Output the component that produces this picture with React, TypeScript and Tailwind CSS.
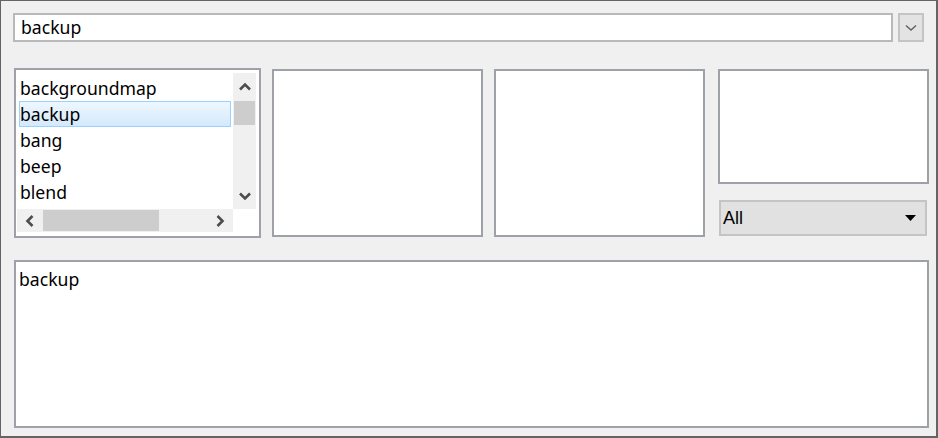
const items = ['backgroundmap', 'backup', 'bang', 'beep', 'blend'];

function Chevron({ dir, className = '' }: { dir: 'up' | 'down' | 'left' | 'right'; className?: string }) {
  const d = {
    up: 'M1 8.5 L6 3.5 L11 8.5',
    down: 'M1 3.5 L6 8.5 L11 3.5',
    left: 'M8.5 1 L3.5 6 L8.5 11',
    right: 'M3.5 1 L8.5 6 L3.5 11',
  }[dir];
  return (
    <svg width="12" height="12" viewBox="0 0 12 12" className={className}>
      <path d={d} fill="none" stroke="currentColor" strokeWidth="2.6" />
    </svg>
  );
}

function ListBox() {
  return (
    <div className="w-[247px] h-[170px] shrink-0 border-2 border-[#9ea2a8] bg-white p-[1px] pt-[3px]">
      <div className="grid grid-cols-[216px_23px] grid-rows-[136px_23px]">
        {/* items */}
        <div className="overflow-hidden pl-[2px] pt-[2px] pr-[2px]">
          {items.map((it) => (
            <div
              key={it}
              className={`h-[26px] leading-[24px] border ${
                it === 'backup'
                  ? 'border-[#99d1ff] bg-gradient-to-b from-[#eef7ff] to-[#d4e9fb]'
                  : 'border-transparent'
              }`}
            >
              {it}
            </div>
          ))}
        </div>
        {/* vertical scrollbar */}
        <div className="flex flex-col bg-[#f0f0f0] text-[#4d4d4d]">
          <div className="h-[28px] flex items-center justify-center">
            <Chevron dir="up" />
          </div>
          <div className="mx-[1px] h-[24px] bg-[#cdcdcd]" />
          <div className="flex-1" />
          <div className="h-[26px] flex items-center justify-center">
            <Chevron dir="down" />
          </div>
        </div>
        {/* horizontal scrollbar */}
        <div className="flex bg-[#f0f0f0] text-[#4d4d4d]">
          <div className="w-[26px] flex items-center justify-center">
            <Chevron dir="left" />
          </div>
          <div className="my-[1px] w-[116px] bg-[#cdcdcd]" />
          <div className="flex-1" />
          <div className="w-[26px] flex items-center justify-center">
            <Chevron dir="right" />
          </div>
        </div>
        <div className="bg-white" />
      </div>
    </div>
  );
}

export default function App() {
  return (
    <div
      className="w-[938px] h-[438px] bg-[#f0f0f0] border-l border-t border-r-2 border-b-2 border-[#646464] pl-[12px] pt-[12px] text-[17.6px] text-black"
      style={{ fontFamily: '"Segoe UI", "Noto Sans", "Open Sans", sans-serif' }}
    >
      {/* top combo */}
      <div className="flex items-center gap-[5px]">
        <div className="w-[880px] h-[29px] border-2 border-[#b9b9b9] bg-white pl-[6px] leading-[25px]">backup</div>
        <div className="w-[26px] h-[29px] border-2 border-[#c4c4c4] bg-[#e3e3e3] flex items-center justify-center text-[#606060]">
          <svg width="12" height="8" viewBox="0 0 12 8">
            <path d="M1 1.5 L6 6 L11 1.5" fill="none" stroke="currentColor" strokeWidth="1.4" />
          </svg>
        </div>
      </div>

      {/* middle row */}
      <div className="mt-[26px] ml-[1px] flex items-start">
        <ListBox />
        <div className="ml-[11px] mt-[1px] w-[211px] h-[168px] border-2 border-[#9ea2a8] bg-white" />
        <div className="ml-[11px] mt-[1px] w-[211px] h-[168px] border-2 border-[#9ea2a8] bg-white" />
        <div className="ml-[13px] mt-[1px] w-[211px] flex flex-col">
          <div className="h-[115px] border-2 border-[#9ea2a8] bg-white" />
          <div
            className="mt-[16px] ml-[1px] w-[208px] h-[36px] border-2 border-[#c4c4c4] bg-[#e1e1e1] flex items-center justify-between pl-[2px] pr-[9px]"
            style={{ fontFamily: '"Liberation Sans", Arial, sans-serif' }}
          >
            <span className="text-[18px]">All</span>
            <svg width="11" height="6" viewBox="0 0 11 6">
              <path d="M0 0 L11 0 L5.5 6 Z" fill="#000" />
            </svg>
          </div>
        </div>
      </div>

      {/* bottom text area */}
      <div className="mt-[22px] ml-[1px] w-[915px] h-[168px] border-2 border-[#9ea2a8] bg-white pl-[3px] pt-[4px] leading-[26px]">
        backup
      </div>
    </div>
  );
}
